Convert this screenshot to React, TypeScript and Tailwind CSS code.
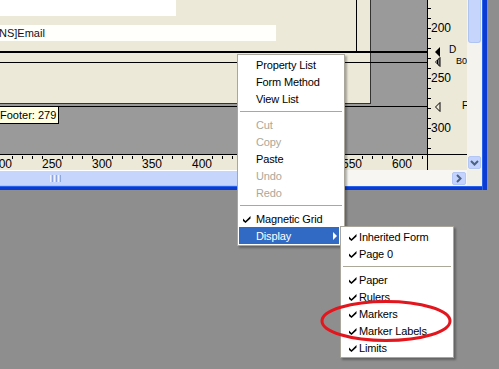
import React from 'react';

type MenuEntry =
  | 'sep'
  | { label: string; checked?: boolean; disabled?: boolean; active?: boolean; arrow?: boolean };

const mainMenu: MenuEntry[] = [
  { label: 'Property List' },
  { label: 'Form Method' },
  { label: 'View List' },
  'sep',
  { label: 'Cut', disabled: true },
  { label: 'Copy', disabled: true },
  { label: 'Paste' },
  { label: 'Undo', disabled: true },
  { label: 'Redo', disabled: true },
  'sep',
  { label: 'Magnetic Grid', checked: true },
  { label: 'Display', active: true, arrow: true },
];

const displayMenu: MenuEntry[] = [
  { label: 'Inherited Form', checked: true },
  { label: 'Page 0', checked: true },
  'sep',
  { label: 'Paper', checked: true },
  { label: 'Rulers', checked: true },
  { label: 'Markers', checked: true },
  { label: 'Marker Labels', checked: true },
  { label: 'Limits', checked: true },
];

function CheckMark({ color = '#000' }: { color?: string }) {
  return (
    <svg width="8" height="8" viewBox="0 0 8 8" className="block">
      <polygon points="0,3.5 2.5,6 7.5,1 7.5,3.5 2.5,8 0,6" fill={color} />
    </svg>
  );
}

function Menu({ entries, sub }: { entries: MenuEntry[]; sub?: boolean }) {
  return (
    <div className="flex flex-col pt-[1px] pb-[1px] bg-white border border-[#a9a79c] shadow-[2px_2px_2px_rgba(0,0,0,0.3)]">
      {entries.map((e, i) => {
        if (e === 'sep') {
          return (
            <div key={i} className="h-[9px] flex items-center mx-[2px]">
              <div className="h-px w-full bg-[#aca899]" />
            </div>
          );
        }
        const color = e.active ? 'text-white' : e.disabled ? 'text-[#aca899]' : 'text-black';
        return (
          <div
            key={i}
            className={`h-[17px] flex items-center ml-[1px] ${sub ? 'mr-[1px]' : 'mr-[5px]'} ${
              e.active ? 'bg-[#316ac5]' : ''
            } ${color}`}
          >
            <div className={`${sub ? 'w-[17px] pl-[7px]' : 'w-[17px] pl-[4px]'} flex items-center pt-px`}>
              {e.checked && <CheckMark color={e.active ? '#fff' : '#000'} />}
            </div>
            <span className="flex-1 pt-px whitespace-nowrap text-[11px] leading-none tracking-[-0.15px]">{e.label}</span>
            {e.arrow && (
              <svg width="4" height="8" viewBox="0 0 4 8" className="mr-[2px]">
                <polygon points="0,0 4,4 0,8" fill="#fff" />
              </svg>
            )}
          </div>
        );
      })}
    </div>
  );
}

const hTicks = Array.from({ length: 43 }, (_, i) => 2 + i * 10).filter((_, i) => i % 5 !== 0);
const hLabels = [
  { v: 200, x: 2 },
  { v: 250, x: 52 },
  { v: 300, x: 102 },
  { v: 350, x: 152 },
  { v: 400, x: 202 },
  { v: 550, x: 352 },
  { v: 600, x: 402 },
];
const vTicks = Array.from({ length: 15 }, (_, i) => 8 + i * 10);
const vLabels = [200, 250, 300];

function HRuler() {
  return (
    <div className="relative w-[427px] h-full bg-[#ece9d8] overflow-hidden">
      <svg width="427" height="15" className="absolute left-0 top-0">
        {hTicks.map((x) => (
          <line key={x} x1={x + 0.5} y1="1" x2={x + 0.5} y2="4" stroke="#000" strokeWidth="1" />
        ))}
      </svg>
      {hLabels.map((l) => (
        <span
          key={l.v}
          className="absolute top-[3px] w-[30px] text-center text-[12px] leading-none text-black"
          style={{ left: l.x - 15 }}
        >
          {l.v}
        </span>
      ))}
    </div>
  );
}

function VRuler() {
  return (
    <div className="relative w-[39px] h-full bg-[#ece9d8] overflow-hidden">
      <svg width="39" height="154" className="absolute left-0 top-0">
        {vTicks.map((y) => (
          <line key={y} x1="0" y1={y + 0.5} x2="3" y2={y + 0.5} stroke="#000" strokeWidth="1" />
        ))}
        <polygon points="7,52 12,47 12,57" fill="#000" />
        <path d="M7.5 62 L12 57.5 L12 66.5 Z" fill="#fff" stroke="#000" strokeWidth="1" />
        <path d="M9.5 60 V64 M11 58.5 V65.5" stroke="#000" strokeWidth="1" />
        <path d="M7.5 107 L12 102.5 L12 111.5 Z" fill="none" stroke="#000" strokeWidth="1" />
      </svg>
      {vLabels.map((v, i) => (
        <span
          key={v}
          className="absolute left-[3px] text-[12px] leading-[14px] text-black"
          style={{ top: 21 + i * 50 }}
        >
          {v}
        </span>
      ))}
      <span className="absolute left-[21px] top-[45px] text-[10px] leading-[10px] text-black">D</span>
      <span className="absolute left-[28px] top-[56px] text-[9px] leading-[10px] text-black">B0</span>
      <span className="absolute left-[34px] top-[101px] text-[10px] leading-[10px] text-black">F</span>
    </div>
  );
}

export default function App() {
  return (
    <div className="relative w-[499px] h-[369px] overflow-hidden bg-[#8e8e8e] font-['Liberation_Sans',Arial,sans-serif]">
      {/* designer window */}
      <div className="flex w-[487px] h-[190px]">
        <div className="flex flex-col w-[482px]">
          <div className="flex h-[170px]">
            <div className="flex flex-col w-[467px]">
              <div className="flex h-[154px]">
                {/* canvas */}
                <div className="relative w-[427px] h-full bg-[#9a9a9a]">
                  <div className="w-[371px] h-[104px] bg-[#ece9d8] border-r border-b border-[#333]">
                    <div className="flex flex-col w-[357px] h-[52px] border-r border-black">
                      <div className="w-[176px] h-[16px] bg-white" />
                      <div className="mt-[9px] w-[276px] h-[16px] bg-[#fffffb] flex items-center">
                        <span className="ml-[-1px] pt-px text-[11px] leading-none text-[#101028]">NS]Email</span>
                      </div>
                    </div>
                  </div>
                  <div className="absolute left-0 right-0 top-[51px] h-[2px] bg-black" />
                  <div className="absolute left-0 right-0 top-[62px] h-px bg-black" />
                  <div className="absolute left-0 right-0 top-[106px] h-px bg-black" />
                  <div className="absolute left-[-4px] top-[106px] h-[18px] w-[63px] border border-black bg-[#ffffe1] flex items-center pl-[3px]">
                    <span className="pt-px text-[11px] leading-none text-black whitespace-nowrap">Footer: 279</span>
                  </div>
                </div>
                <div className="w-px h-full bg-black" />
                <VRuler />
              </div>
              <div className="flex h-[16px] border-t border-black">
                <HRuler />
                <div className="w-px h-full bg-black" />
                <div className="w-[39px] h-full bg-[#ece9d8]" />
              </div>
            </div>
            {/* vertical scrollbar */}
            <div className="flex flex-col w-[15px] h-full bg-[#f4f3ee]">
              <div className="h-[43px] mx-px rounded-b-[3px] bg-[#c6d5fb] border border-t-0 border-[#b0c4f2]" />
              <div className="flex-1" />
              <div className="h-[13px] mx-px mb-px rounded-[2px] bg-[#c3d3fd] border border-[#b4c7f4] flex items-center justify-center">
                <svg width="9" height="6" viewBox="0 0 9 6">
                  <path d="M1 1 L4.5 4.5 L8 1" fill="none" stroke="#4d6185" strokeWidth="2" />
                </svg>
              </div>
            </div>
          </div>
          {/* horizontal scrollbar */}
          <div className="flex h-[16px] bg-[#f7f6f2]">
            <div className="w-[300px] h-full bg-[#c6d5fb] border-t border-white border-b border-b-[#b0c4f2] flex items-center">
              <div className="ml-[50px] flex gap-[1px]">
                <div className="w-px h-[7px] bg-[#eef3ff]" />
                <div className="w-px h-[7px] bg-[#8da6e0]" />
                <div className="w-px h-[7px] bg-[#eef3ff]" />
                <div className="w-px h-[7px] bg-[#8da6e0]" />
                <div className="w-px h-[7px] bg-[#eef3ff]" />
                <div className="w-px h-[7px] bg-[#8da6e0]" />
              </div>
            </div>
            <div className="flex-1" />
            <div className="w-[14px] h-[13px] my-[2px] mr-px rounded-[2px] bg-[#c3d3fd] border border-[#b4c7f4] flex items-center justify-center">
              <svg width="6" height="9" viewBox="0 0 6 9">
                <path d="M1 1 L4.5 4.5 L1 8" fill="none" stroke="#4d6185" strokeWidth="2" />
              </svg>
            </div>
            <div className="w-[15px] h-full bg-[#f0efe8]" />
          </div>
          <div className="h-[4px] bg-[#0b3bd3] border-t border-[#2a63ea]" />
        </div>
        <div className="w-[5px] h-full bg-[#0b3bd3] border-l border-[#2a63ea]" />
      </div>

      {/* context menu */}
      <div className="absolute left-[237px] top-[54px] w-[108px]">
        <Menu entries={mainMenu} />
      </div>
      <div className="absolute left-[340px] top-[226px] w-[114px]">
        <Menu entries={displayMenu} sub />
      </div>

      {/* annotation */}
      <svg width="140" height="50" className="absolute left-[316px] top-[296px]" viewBox="0 0 140 50">
        <ellipse cx="70" cy="25" rx="64" ry="19.5" fill="none" stroke="#e3161e" strokeWidth="3" />
      </svg>
    </div>
  );
}
